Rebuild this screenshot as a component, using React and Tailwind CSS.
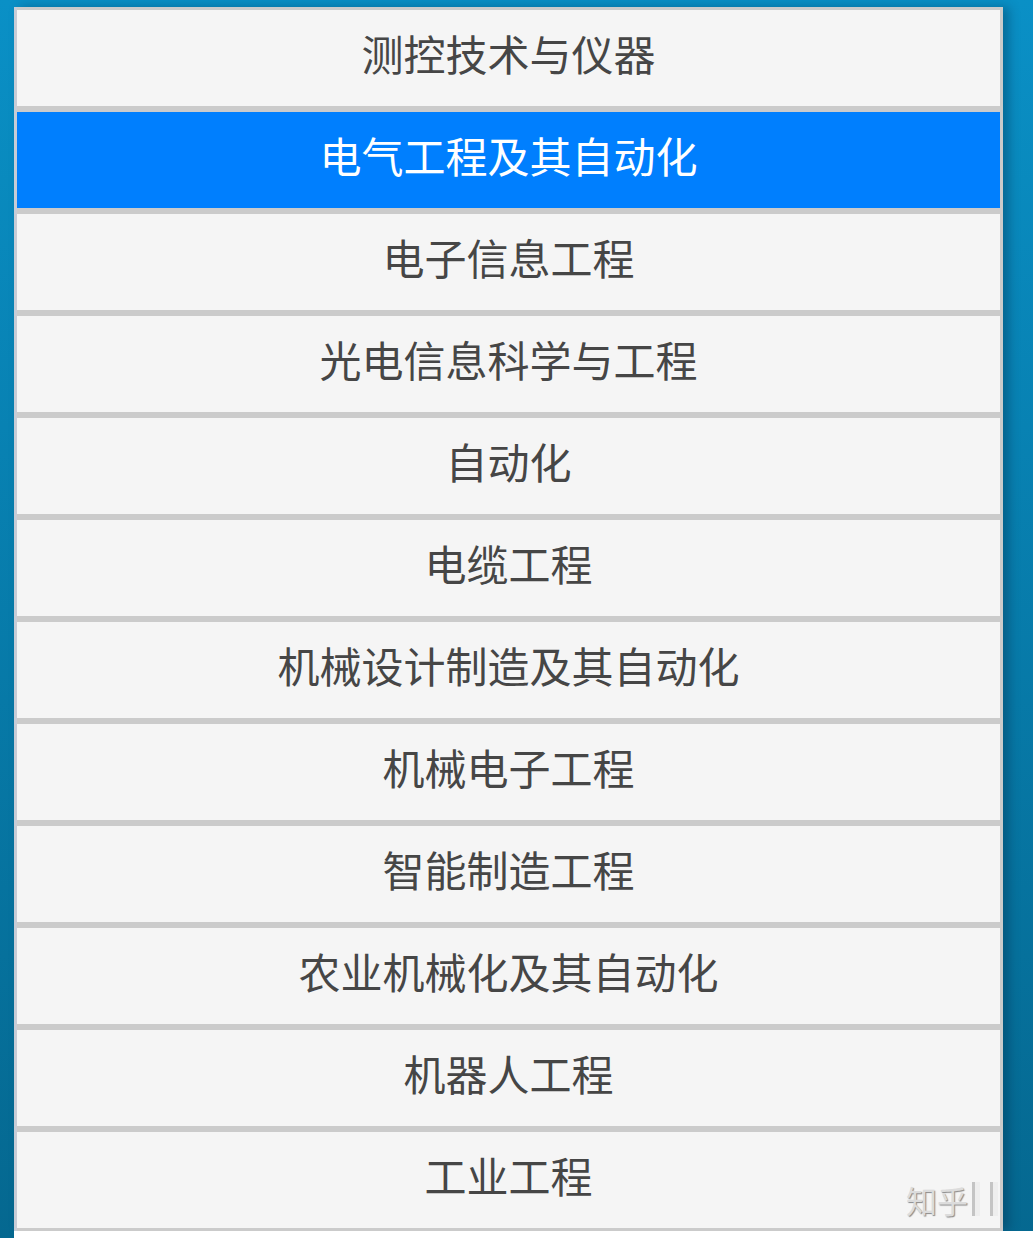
const majors = [
  '测控技术与仪器',
  '电气工程及其自动化',
  '电子信息工程',
  '光电信息科学与工程',
  '自动化',
  '电缆工程',
  '机械设计制造及其自动化',
  '机械电子工程',
  '智能制造工程',
  '农业机械化及其自动化',
  '机器人工程',
  '工业工程',
];

const font = { fontFamily: '"Noto Sans CJK SC", "Noto Sans", sans-serif' };

export default function App() {
  return (
    <div className="w-[1033px] h-[1238px] overflow-hidden bg-gradient-to-b from-[#0a90c6] to-[#056890] relative" style={font}>
      <div className="ml-[14px] mt-[7px] w-[989px] bg-[#cbcbcb] border-l-[3px] border-[#c7ccd6] pt-[3px] pr-[3px] pb-[3px] flex flex-col gap-[6px] shadow-[6px_0_10px_rgba(0,40,70,0.35)]">
        {majors.map((name, i) => (
          <div
            key={name}
            className={`h-[96px] pb-[10px] flex items-center justify-center text-[42px] leading-none ${i === 1 ? 'bg-[#007ffe] text-white' : 'bg-[#f5f5f5] text-[#464646]'}`}
          >
            {name}
          </div>
        ))}
      </div>
      <div className="ml-[14px] h-[20px] bg-white"></div>

      <div className="absolute left-[906px] top-[1182px] flex items-center">
        <span className="text-[31px] leading-none text-[#dcdcdc] [text-shadow:1px_1px_1px_#8a8a8a]">知乎</span>
        <div className="ml-[4px] w-[8px] h-[34px] border-l-[3px] border-[#c4c4c4] bg-[#eeeeee]"></div>
        <div className="ml-[10px] w-[8px] h-[34px] border-l-[3px] border-[#c4c4c4] bg-[#eeeeee]"></div>
      </div>
    </div>
  );
}
